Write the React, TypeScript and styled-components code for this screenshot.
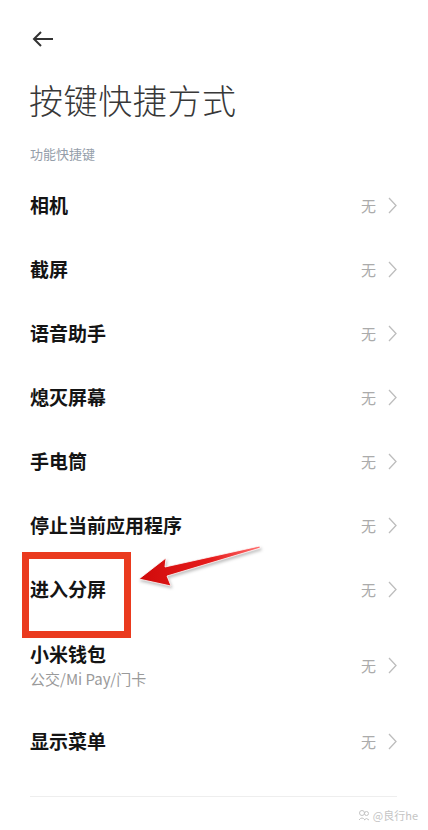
import styled, { createGlobalStyle } from "styled-components";

const GlobalStyle = createGlobalStyle`
  html, body {
    margin: 0;
    padding: 0;
    background: #ffffff;
  }
  body {
    font-family: "Noto Sans CJK SC", "Noto Sans", sans-serif;
    -webkit-font-smoothing: antialiased;
  }
`;

const Page = styled.div`
  position: relative;
  width: 428px;
  height: 830px;
  overflow: hidden;
  box-sizing: border-box;
  padding: 28px 31px 0 30px;
  background: #ffffff;
`;

const BackButton = styled.div`
  height: 22px;
  display: flex;
  align-items: center;
  margin-left: 2px;
`;

const Title = styled.h1`
  margin: 28px 0 0 -1px;
  font-size: 34px;
  line-height: 44px;
  font-weight: 300;
  color: #383838;
  letter-spacing: 0.6px;
`;

const SectionLabel = styled.div`
  margin-top: 23px;
  font-size: 13px;
  line-height: 18px;
  color: #959eaa;
`;

const List = styled.div`
  margin-top: 10px;
  display: flex;
  flex-direction: column;
`;

const Row = styled.div<{ $tall?: boolean }>`
  height: ${(p) => (p.$tall ? 88 : 64)}px;
  display: flex;
  align-items: center;
  justify-content: space-between;
`;

const Texts = styled.div`
  display: flex;
  flex-direction: column;
`;

const RowTitle = styled.div`
  font-size: 19px;
  line-height: 26px;
  font-weight: 600;
  color: #141414;
`;

const RowSub = styled.div`
  font-size: 15px;
  line-height: 20px;
  color: #9a9a9a;
  margin-top: 2px;
`;

const Value = styled.div`
  display: flex;
  align-items: center;
  gap: 12px;
  font-size: 15px;
  color: #ababab;
`;

const Divider = styled.div`
  margin-top: 23px;
  height: 1px;
  background: #eeeeee;
`;

const Watermark = styled.div`
  position: absolute;
  right: 10px;
  bottom: 7px;
  display: flex;
  align-items: center;
  gap: 3px;
  font-size: 11px;
  color: #c4c4c4;
`;

const HighlightBox = styled.div`
  position: absolute;
  left: 22px;
  top: 552px;
  width: 109px;
  height: 86px;
  box-sizing: border-box;
  border: 7px solid #ea3a1e;
`;

const ArrowMark = styled.svg`
  position: absolute;
  left: 130px;
  top: 535px;
  filter: drop-shadow(1px 2px 1.5px rgba(0, 0, 0, 0.25));
`;

const Chevron = () => (
  <svg width="9" height="17" viewBox="0 0 9 17">
    <polyline points="1,1 8,8.5 1,16" fill="none" stroke="#bdbdbd" strokeWidth="1.3" />
  </svg>
);

const items: { title: string; sub?: string }[] = [
  { title: "相机" },
  { title: "截屏" },
  { title: "语音助手" },
  { title: "熄灭屏幕" },
  { title: "手电筒" },
  { title: "停止当前应用程序" },
  { title: "进入分屏" },
  { title: "小米钱包", sub: "公交/Mi Pay/门卡" },
  { title: "显示菜单" },
];

export default function App() {
  return (
    <>
      <GlobalStyle />
      <Page>
        <BackButton>
          <svg width="22" height="16" viewBox="0 0 22 16">
            <line x1="2" y1="8" x2="21" y2="8" stroke="#333" strokeWidth="2" />
            <polyline points="9,1 2,8 9,15" fill="none" stroke="#333" strokeWidth="2" />
          </svg>
        </BackButton>
        <Title>按键快捷方式</Title>
        <SectionLabel>功能快捷键</SectionLabel>
        <List>
          {items.map((it) => (
            <Row key={it.title} $tall={!!it.sub}>
              <Texts>
                <RowTitle>{it.title}</RowTitle>
                {it.sub && <RowSub>{it.sub}</RowSub>}
              </Texts>
              <Value>
                无
                <Chevron />
              </Value>
            </Row>
          ))}
        </List>
        <Divider />

        <HighlightBox />
        <ArrowMark width="140" height="60" viewBox="0 0 140 60">
          <defs>
            <linearGradient id="arrowFill" x1="0" y1="0" x2="1" y2="0">
              <stop offset="0" stopColor="#d00b0b" />
              <stop offset="0.6" stopColor="#e61c1c" />
              <stop offset="1" stopColor="#ff7070" />
            </linearGradient>
          </defs>
          <polygon
            points="9,44 36,23 35,32 129.7,11 130.3,13 37,41 41,51"
            fill="url(#arrowFill)"
            stroke="#ffffff"
            strokeWidth="0.8"
          />
        </ArrowMark>

        <Watermark>
          <svg width="12" height="12" viewBox="0 0 12 12">
            <circle cx="4" cy="4" r="2.5" fill="none" stroke="#c4c4c4" strokeWidth="1" />
            <circle cx="8.5" cy="4.5" r="2" fill="none" stroke="#c4c4c4" strokeWidth="1" />
            <path d="M1 11 Q4 7 7 11 M6 11 Q8.5 8 11 11" fill="none" stroke="#c4c4c4" strokeWidth="1" />
          </svg>
          @良行he
        </Watermark>
      </Page>
    </>
  );
}
